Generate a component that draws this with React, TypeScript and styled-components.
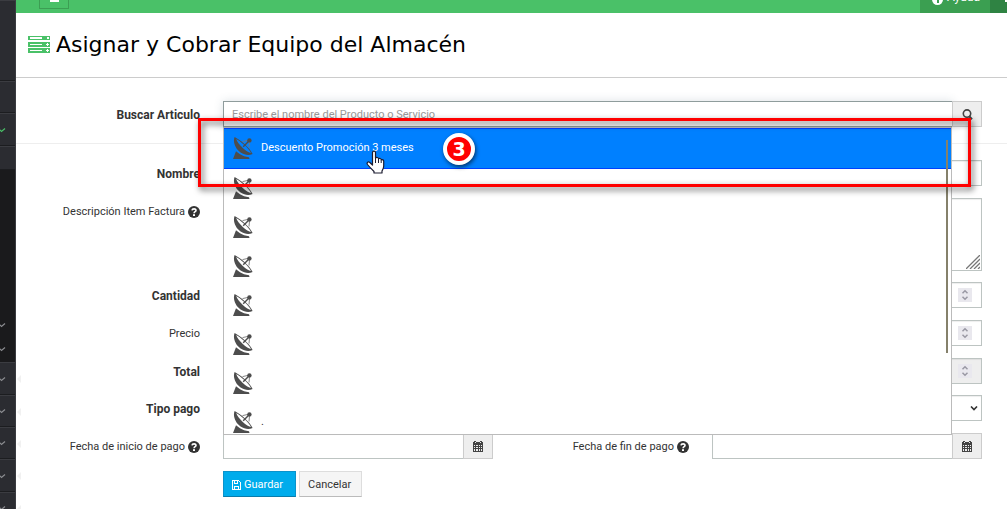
import React from "react";
import styled, { createGlobalStyle, css } from "styled-components";

const GlobalStyle = createGlobalStyle`
  *, *::before, *::after { box-sizing: border-box; }
  body {
    margin: 0;
    background: #fff;
    color: #333;
    font: 11px/16px Roboto, "Liberation Sans", sans-serif;
  }
  button, input, textarea, select { font: inherit; color: inherit; border-radius: 0; }
`;

const Shell = styled.div`
  display: flex;
  height: 100vh;
  overflow: hidden;
`;

const Sidebar = styled.nav`
  flex: 0 0 16px;
  display: flex;
  flex-direction: column;
  background: #1a1a1c;
  border-right: 1px solid #3a3b40;
`;

const NavItem = styled.button<{ $size: number; $sub?: boolean; $active?: boolean; $notch?: boolean }>`
  position: relative;
  flex: 0 0 ${(p) => p.$size}px;
  display: flex;
  align-items: center;
  justify-content: flex-start;
  padding: 2px 0 0;
  border: 0;
  color: ${(p) => (p.$active ? "#4ac168" : "#8b8c90")};
  background: ${(p) => (p.$sub ? "transparent" : "#2b2c31")};
  ${(p) =>
    !p.$sub &&
    css`
      border-bottom: 1px solid #1c1d20;
      box-shadow: inset 0 1px 0 #3b3c41;
    `}
  ${(p) =>
    p.$notch &&
    css`
      &::after {
        content: "";
        position: absolute;
        left: 17px;
        border: 4px solid transparent;
        border-left: 0;
        border-right-color: #f1f1f1;
      }
    `}
`;

const SubMenu = styled.div`
  flex: 0 0 192px;
  display: flex;
  flex-direction: column;
  justify-content: flex-end;
  padding-bottom: 2px;
`;

const Page = styled.div`
  flex: 1;
  min-width: 0;
`;

const TopBar = styled.header`
  height: 13px;
  display: flex;
  align-items: flex-end;
  overflow: hidden;
  background: #4ac168;
`;

const MenuButton = styled.button`
  height: 30px;
  width: 30px;
  margin: 0 auto 4px 23px;
  display: flex;
  align-items: flex-end;
  justify-content: center;
  padding: 0 0 6px;
  color: #fff;
  background: #4ac168;
  border: 1px solid #3c9e53;
`;

const HelpLink = styled.a`
  height: 45px;
  width: 70px;
  display: flex;
  align-items: flex-end;
  gap: 4px;
  padding: 0 0 8px 12px;
  color: #fff;
  background: #3b9f51;
  text-decoration: none;
  font-size: 12px;
`;

const UserButton = styled.button`
  height: 45px;
  width: 17px;
  display: flex;
  align-items: flex-end;
  justify-content: flex-end;
  padding: 0 0 11px;
  border: 0;
  color: #fff;
  background: #2f8343;
`;

const TitleBar = styled.div`
  height: 65px;
  display: flex;
  align-items: center;
  gap: 6px;
  padding: 0 12px;
  border-bottom: 1px solid #ccc;
`;

const Title = styled.h1`
  margin: 0;
  font: 400 22px/28px "DejaVu Sans", sans-serif;
  color: #000;
`;

const Form = styled.form`
  padding: 23px 25px 0 0;
`;

const Row = styled.div<{ $gap?: number; $split?: boolean }>`
  display: grid;
  grid-template-columns: ${(p) => (p.$split ? "184px 1fr 173px 1fr" : "184px 1fr")};
  column-gap: 23px;
  margin-bottom: ${(p) => p.$gap ?? 12}px;
`;

const Label = styled.label<{ $strong?: boolean }>`
  display: flex;
  justify-content: flex-end;
  align-items: center;
  gap: 3px;
  height: 26px;
  padding-top: 1px;
  font-weight: ${(p) => (p.$strong ? 700 : 400)};
  font-size: ${(p) => (p.$strong ? 12 : 11)}px;
  white-space: nowrap;
`;

const Divider = styled.hr`
  margin: 0 -25px 16px 0;
  border: 0;
  border-top: 1px solid #eee;
`;

const control = css`
  display: block;
  width: 100%;
  min-width: 0;
  height: 26px;
  padding: 0 8px;
  border: 1px solid #bdc4c2;
  background: #fff;
  box-shadow: inset 0 1px 1px rgba(0, 0, 0, 0.07);
  outline: 0;
`;

const Input = styled.input<{ $focused?: boolean }>`
  ${control}
  ${(p) =>
    p.$focused &&
    css`
      border-color: #8f9c9c;
      box-shadow: 0 0 10px rgba(60, 90, 110, 0.18);
    `}
  &::placeholder { color: #999; opacity: 1; }
`;

const TextArea = styled.textarea`
  ${control}
  height: 73px;
  resize: none;
`;

const Select = styled.select`
  ${control}
  appearance: none;
`;

const Field = styled.div`
  position: relative;
`;

const Adornment = styled.span<{ $right: number; $bottom: number }>`
  position: absolute;
  right: ${(p) => p.$right}px;
  bottom: ${(p) => p.$bottom}px;
  display: flex;
  pointer-events: none;
`;

const NumberInput = styled(Input)`
  &:disabled { background: #eee; }
`;

const Group = styled.div`
  position: relative;
  display: flex;
`;

const Addon = styled.button`
  flex: 0 0 30px;
  height: 26px;
  display: flex;
  align-items: center;
  justify-content: center;
  margin-left: -1px;
  padding: 0;
  color: #444;
  background: #eee;
  border: 1px solid #ccc;
`;

const Results = styled.ul`
  position: absolute;
  z-index: 2;
  top: 26px;
  left: 0;
  right: 30px;
  height: 308px;
  margin: 0;
  padding: 0;
  overflow: hidden;
  list-style: none;
  background: #fff;
  border: 1px solid #bbb;
`;

const Result = styled.li<{ $selected?: boolean }>`
  display: flex;
  align-items: center;
  gap: 8px;
  height: ${(p) => (p.$selected ? 41 : 39)}px;
  padding: 0 9px 1px;
  border: solid ${(p) => (p.$selected ? "#0040ff" : "transparent")};
  border-width: 1px 0;
  color: ${(p) => (p.$selected ? "#fff" : "#333")};
  background: ${(p) => (p.$selected ? "#0080ff" : "#fff")};
`;

const ScrollThumb = styled.span`
  position: absolute;
  top: 12px;
  right: 3px;
  width: 2px;
  height: 213px;
  background: #85816b;
`;

const Highlight = styled.div`
  position: absolute;
  z-index: 3;
  top: 17px;
  left: -25px;
  right: 11px;
  height: 69px;
  border: 3px solid #f00;
  filter: drop-shadow(2px 3px 3px rgba(0, 0, 0, 0.65));
  pointer-events: none;
`;

const Step = styled.span`
  position: absolute;
  z-index: 4;
  top: 32px;
  left: 220px;
  width: 32px;
  height: 32px;
  display: flex;
  align-items: center;
  justify-content: center;
  border: 4px solid #fff;
  border-radius: 50%;
  color: #fff;
  background: #f00;
  box-shadow: 1px 2px 4px rgba(0, 0, 0, 0.6);
  font: 700 19px/20px "DejaVu Sans", sans-serif;
`;

const Pointer = styled.svg`
  position: absolute;
  z-index: 5;
  top: 49px;
  left: 143px;
`;

const Actions = styled.div`
  display: flex;
  gap: 3px;
  padding-left: 207px;
`;

const Button = styled.button<{ $primary?: boolean }>`
  display: flex;
  align-items: center;
  gap: 3px;
  height: 26px;
  padding: 1px 8px 0;
  min-width: ${(p) => (p.$primary ? 73 : 63)}px;
  border: 1px solid ${(p) => (p.$primary ? "#0b93cb" : "#ddd")};
  border-bottom-color: ${(p) => (p.$primary ? "#0a7cab" : "#bbb")};
  color: ${(p) => (p.$primary ? "#fff" : "#333")};
  background: ${(p) => (p.$primary ? "#00acec" : "#f5f5f5")};
`;

const Chevron = () => (
  <svg width="6" height="5" viewBox="0 0 6 5" fill="none" stroke="currentColor" strokeWidth="1.2">
    <path d="M-1 1 L1.5 3.5 L5 .5" />
  </svg>
);

const HelpIcon = () => (
  <svg width="12" height="12" viewBox="0 0 12 12">
    <circle cx="6" cy="6" r="6" fill="#333" />
    <path d="M4 4.4C4.2 2.4 8 2.3 8 4.4C8 5.8 6.1 5.6 6.1 7.2" fill="none" stroke="#fff" strokeWidth="1.6" />
    <rect x="5" y="8.2" width="2" height="1.8" fill="#fff" />
  </svg>
);

const CalendarIcon = () => (
  <svg width="10" height="11" viewBox="0 0 10 11" shapeRendering="crispEdges">
    <path fill="#444" d="M0 1h1V0h2v1h4V0h2v1h1v10H0z" />
    <path
      fill="#eee"
      d="M2 1h1v1H2zM7 1h1v1H7zM1 4h1v1H1zM3 4h2v1H3zM6 4h1v1H6zM8 4h1v1H8zM1 6h1v1H1zM3 6h2v1H3zM6 6h1v1H6zM8 6h1v1H8zM1 8h1v2H1zM3 8h2v2H3zM6 8h1v2H6zM8 8h1v2H8z"
    />
  </svg>
);

const SearchIcon = () => (
  <svg width="11" height="11" viewBox="0 0 11 11" fill="none" stroke="#444" strokeWidth="1.6">
    <circle cx="5" cy="4.6" r="3.7" />
    <path d="M7 7l3 3.2" strokeWidth="2" />
  </svg>
);

const SaveIcon = () => (
  <svg width="9" height="10" viewBox="0 0 9 10" fill="none" stroke="#fff" shapeRendering="crispEdges">
    <path d="M.5.5h6l2 2v7h-8z" />
    <path d="M2.5 0v3.5h3V0M2 6.5h5M2.5 6v3M6.5 6v3" />
  </svg>
);

const ServerIcon = () => (
  <svg width="22" height="18" viewBox="0 0 22 18" shapeRendering="crispEdges">
    <path fill="#4ac168" d="M0 0h22v4H0zM0 6h22v5H0zM0 12h22v5H0z" />
    <path
      fill="#fff"
      d="M2 1h12v2H2zM19 1h2v2h-2zM2 8h12v1H2zM18 8h3v1h-3zM19 7h1v3h-1zM2 14h12v1H2zM18 14h3v1h-3zM19 13h1v3h-1z"
    />
  </svg>
);

const DishIcon = () => (
  <svg width="20" height="22" viewBox="0 0 20 22">
    <path
      fill="#4d4d4d"
      fillRule="evenodd"
      d="M1.600 0C-.4 5 2.400 12 7.600 15.500C11.500 18.100 16 18.600 19.600 17C18.400 14.200 15 10.200 11.200 6.800C7.700 3.700 4.200 1.200 1.600 0ZM3.200 1.900C3.900 4.500 6.400 7.700 9.800 10.900C12.900 13.800 16 15.700 18 16C16.800 13.500 14.200 10.600 11 7.800C8 5.100 5.300 3 3.200 1.900Z"
    />
    <path fill="none" stroke="#4d4d4d" strokeWidth="1.400" d="M16.400 3.500L10.200 9.800" />
    <path fill="none" stroke="#777" strokeWidth=".9" d="M9.500 4.600L15 3.400M16.500 5L16 10.500" />
    <circle cx="16.400" cy="3.400" r="2.200" fill="#4d4d4d" />
    <path fill="#4d4d4d" d="M3 14.200L7 17.300C9.500 19 12.500 19.600 16 20.300L16.500 22H0Z" />
  </svg>
);

const Spinner = () => (
  <svg width="14" height="14" viewBox="0 0 14 14" fill="none" stroke="#9a99a4" strokeWidth="1.500">
    <path fill="#e9e8ee" stroke="none" d="M0 0h14v14H0z" />
    <path d="M4.500 5.200L7 2.800L9.500 5.200M4.500 8.800L7 11.200L9.500 8.800" />
  </svg>
);

const NumberField = ({ id, disabled }: { id: string; disabled?: boolean }) => (
  <Field>
    <NumberInput id={id} inputMode="decimal" disabled={disabled} />
    <Adornment $right={10} $bottom={6}>
      <Spinner />
    </Adornment>
  </Field>
);

const DateField = ({ id }: { id: string }) => (
  <Group>
    <Input id={id} />
    <Addon type="button" aria-label="Calendario">
      <CalendarIcon />
    </Addon>
  </Group>
);

const results = ["Descuento Promoción 3 meses", "", "", "", "", "", "", "."];

export default function App() {
  return (
    <Shell>
      <GlobalStyle />
      <Sidebar>
        <NavItem $size={81} />
        <NavItem $size={32} />
        <NavItem $size={33} $active>
          <Chevron />
        </NavItem>
        <NavItem $size={24} />
        <SubMenu>
          <NavItem $size={24} $sub>
            <Chevron />
          </NavItem>
          <NavItem $size={24} $sub>
            <Chevron />
          </NavItem>
        </SubMenu>
        {[33, 32, 32, 33, 32].map((size, i) => (
          <NavItem key={i} $size={size} $notch>
            <Chevron />
          </NavItem>
        ))}
      </Sidebar>
      <Page>
        <TopBar>
          <MenuButton aria-label="Menú">
            <svg width="9" height="8" fill="#fff">
              <path d="M0 0h9v2H0zM0 3h9v2H0zM0 6h9v2H0z" />
            </svg>
          </MenuButton>
          <HelpLink href="#ayuda">
            <svg width="11" height="11" viewBox="0 0 11 11">
              <circle cx="5.500" cy="5.500" r="5.500" fill="#fff" />
              <path d="M5 3h2v6H5z" fill="#3b9f51" />
            </svg>
            Ayuda
          </HelpLink>
          <UserButton aria-label="Usuario">
            <svg width="5" height="4" fill="#fff">
              <path d="M0 0h5v4H3V2H0z" />
            </svg>
          </UserButton>
        </TopBar>
        <TitleBar>
          <ServerIcon />
          <Title>Asignar y Cobrar Equipo del Almacén</Title>
        </TitleBar>
        <Form>
          <Row $gap={16}>
            <Label $strong htmlFor="buscar">Buscar Articulo</Label>
            <Group>
              <Input id="buscar" $focused placeholder="Escribe el nombre del Producto o Servicio" />
              <Addon type="button" aria-label="Buscar">
                <SearchIcon />
              </Addon>
              <Results>
                {results.map((name, i) => (
                  <Result key={i} $selected={i === 0}>
                    <DishIcon />
                    {name}
                  </Result>
                ))}
                <ScrollThumb />
              </Results>
              <Highlight />
              <Step>3</Step>
              <Pointer width="19" height="24" viewBox="0 0 19 24">
                <path
                  fill="#fff"
                  stroke="#1c1c30"
                  strokeWidth="1.200"
                  strokeLinejoin="round"
                  d="M6.500 15V2.500C6.500.6 9.500.6 9.500 2.500V8C10.500 7 12.500 7.300 12.500 8.800C13.500 8 15.200 8.400 15.200 9.800C16.500 9.300 17.700 10 17.700 11.300V16C17.700 18.500 16.500 20 16 21V23H8V21.500C6 19.500 3.500 17 1.500 14.500C.3 12.800 2 11.400 3.500 12.200Z"
                />
                <path stroke="#1c1c30" d="M9.500 8v5M12.500 9v4M15.200 10v3" />
              </Pointer>
            </Group>
          </Row>
          <Divider />
          <Row>
            <Label $strong htmlFor="nombre">Nombre</Label>
            <Input id="nombre" />
          </Row>
          <Row $gap={11}>
            <Label htmlFor="descripcion">
              Descripción Item Factura <HelpIcon />
            </Label>
            <Field>
              <TextArea id="descripcion" />
              <Adornment $right={2} $bottom={2}>
                <svg width="14" height="14" stroke="#777" strokeWidth="1.300">
                  <path d="M0 14L14 0M4 14L14 4M8 14L14 8M12 14L14 12" />
                </svg>
              </Adornment>
            </Field>
          </Row>
          <Row>
            <Label $strong htmlFor="cantidad">Cantidad</Label>
            <NumberField id="cantidad" />
          </Row>
          <Row>
            <Label htmlFor="precio">Precio</Label>
            <NumberField id="precio" />
          </Row>
          <Row $gap={11}>
            <Label $strong htmlFor="total">Total</Label>
            <NumberField id="total" disabled />
          </Row>
          <Row>
            <Label $strong htmlFor="tipo">Tipo pago</Label>
            <Field>
              <Select id="tipo" />
              <Adornment $right={4} $bottom={10}>
                <svg width="8" height="5" fill="none" stroke="#333" strokeWidth="1.600">
                  <path d="M1 .5L4 3.500L7 .5" />
                </svg>
              </Adornment>
            </Field>
          </Row>
          <Row $split>
            <Label htmlFor="inicio">
              Fecha de inicio de pago <HelpIcon />
            </Label>
            <DateField id="inicio" />
            <Label htmlFor="fin">
              Fecha de fin de pago <HelpIcon />
            </Label>
            <DateField id="fin" />
          </Row>
          <Actions>
            <Button type="submit" $primary>
              <SaveIcon />
              Guardar
            </Button>
            <Button type="button">Cancelar</Button>
          </Actions>
        </Form>
      </Page>
    </Shell>
  );
}
